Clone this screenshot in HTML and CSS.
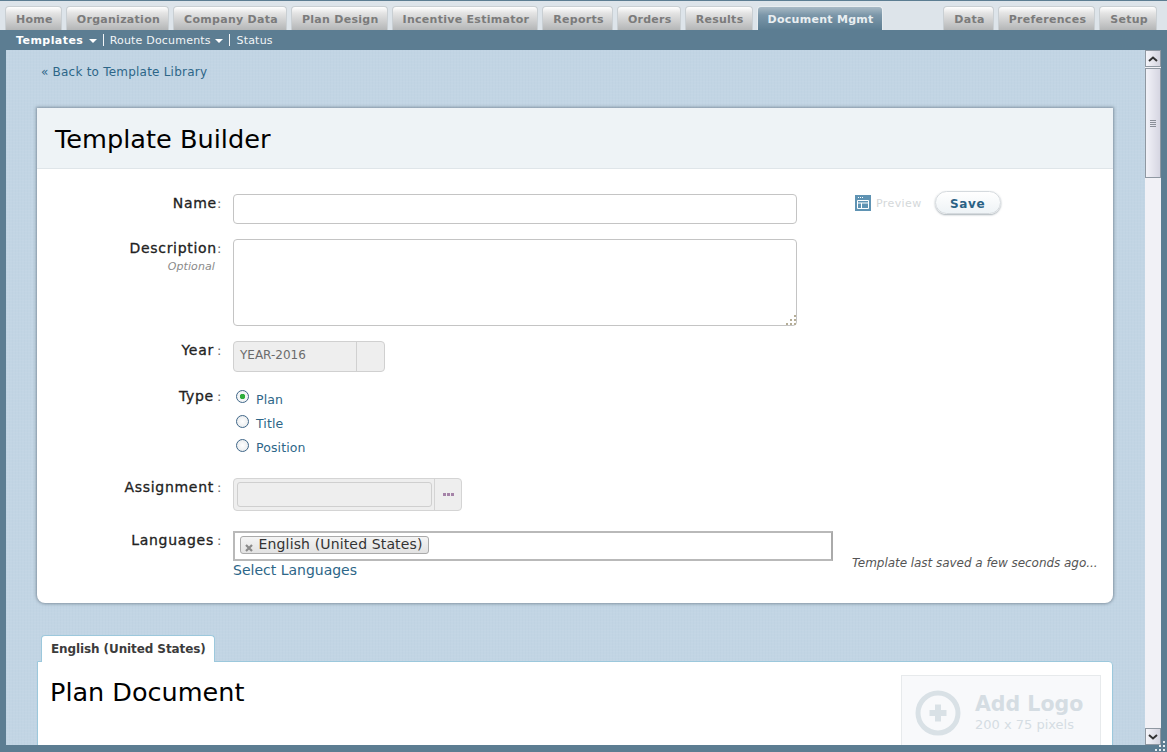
FILE: index.html
```html
<!DOCTYPE html>
<html lang="en">
<head>
  <meta charset="UTF-8" />
  <title>Template Builder</title>
  <link rel="stylesheet" href="styles.css">
</head>
<body>
  <header class="tabbar">
    <nav class="tabs">
      <a class="tab">Home</a>
      <a class="tab">Organization</a>
      <a class="tab">Company Data</a>
      <a class="tab">Plan Design</a>
      <a class="tab">Incentive Estimator</a>
      <a class="tab">Reports</a>
      <a class="tab">Orders</a>
      <a class="tab">Results</a>
      <a class="tab active">Document Mgmt</a>
    </nav>
    <nav class="tabs">
      <a class="tab">Data</a>
      <a class="tab">Preferences</a>
      <a class="tab">Setup</a>
    </nav>
  </header>

  <nav class="subnav">
    <a class="current">Templates <span class="caret"></span></a>
    <span class="sep"></span>
    <a>Route Documents <span class="caret"></span></a>
    <span class="sep"></span>
    <a>Status</a>
  </nav>

  <div class="frame">
    <main class="content">
      <a class="back">« Back to Template Library</a>

      <section class="card">
        <h1 class="card-title">Template Builder</h1>
        <div class="card-body">
          <form class="form">
            <div class="row row-name">
              <label class="label">Name<i>:</i></label>
              <input class="text-input" type="text">
            </div>
            <div class="row row-desc">
              <label class="label">Description<i>:</i><small>Optional</small></label>
              <div class="area-wrap">
                <textarea class="text-area"></textarea>
                <svg class="grip" width="11" height="11" viewBox="0 0 11 11" fill="#b5ad96">
                  <rect x="9" y="1" width="2" height="2"/>
                  <rect x="5" y="5" width="2" height="2"/>
                  <rect x="9" y="5" width="2" height="2"/>
                  <rect x="1" y="9" width="2" height="2"/>
                  <rect x="5" y="9" width="2" height="2"/>
                  <rect x="9" y="9" width="2" height="2"/>
                </svg>
              </div>
            </div>
            <div class="row row-year">
              <label class="label spaced">Year<i>:</i></label>
              <div class="select-box">
                <span class="select-value">YEAR-2016</span>
                <span class="select-arrow"></span>
              </div>
            </div>
            <div class="row row-type">
              <label class="label spaced">Type<i>:</i></label>
              <ul class="radios">
                <li><span class="radio checked"></span>Plan</li>
                <li><span class="radio"></span>Title</li>
                <li><span class="radio"></span>Position</li>
              </ul>
            </div>
            <div class="row row-assign">
              <label class="label spaced">Assignment<i>:</i></label>
              <div class="picker">
                <span class="picker-value"></span>
                <span class="picker-btn"><b></b><b></b><b></b></span>
              </div>
            </div>
            <div class="row row-lang">
              <label class="label spaced">Languages<i>:</i></label>
              <div>
                <div class="chips">
                  <span class="chip">
                    <svg width="8" height="8" viewBox="0 0 8 8"><path d="M1 1l6 6M7 1L1 7" stroke="#8a8a8a" stroke-width="2.2"/></svg>
                    English (United States)
                  </span>
                </div>
                <a class="select-link">Select Languages</a>
              </div>
            </div>
          </form>

          <aside class="side">
            <div class="actions">
              <a class="preview">
                <svg width="16" height="16" viewBox="0 0 16 16">
                  <rect width="16" height="16" fill="#5f93b3"/>
                  <path d="M2.5 5.5h11v8h-11zM6.5 8v5.5M3 8h10" fill="none" stroke="#fff"/>
                  <path d="M3 2h1v1H3zM5 2h1v1H5zM7 2h1v1H7z" fill="#fff"/>
                </svg>
                Preview
              </a>
              <button class="save" type="button">Save</button>
            </div>
            <p class="saved-note">Template last saved a few seconds ago...</p>
          </aside>
        </div>
      </section>

      <section class="doc">
        <div class="doc-tab">English (United States)</div>
        <div class="doc-page">
          <h2 class="doc-title">Plan Document</h2>
          <div class="logo-box">
            <svg width="46" height="46" viewBox="0 0 46 46">
              <circle cx="23" cy="23" r="20" fill="none" stroke="#d9e1e6" stroke-width="5"/>
              <path d="M23 14.5v17M14.5 23h17" stroke="#d9e1e6" stroke-width="6"/>
            </svg>
            <div class="logo-text">
              <strong>Add Logo</strong>
              <span>200 x 75 pixels</span>
            </div>
          </div>
        </div>
      </section>
    </main>

    <div class="scrollbar">
      <span class="sb-btn">
        <svg width="10" height="6" viewBox="0 0 10 6"><path d="M1 5l4-3.5L9 5" fill="none" stroke="#333" stroke-width="2"/></svg>
      </span>
      <span class="sb-thumb"><i></i><i></i><i></i><i></i></span>
      <span class="sb-track"></span>
      <span class="sb-btn">
        <svg width="10" height="6" viewBox="0 0 10 6"><path d="M1 1l4 3.5L9 1" fill="none" stroke="#333" stroke-width="2"/></svg>
      </span>
    </div>
  </div>

  <svg class="window-grip" width="12" height="12" viewBox="0 0 12 12" fill="#e6ecf0">
    <rect x="9" y="1" width="2" height="2"/>
    <rect x="5" y="5" width="2" height="2"/>
    <rect x="9" y="5" width="2" height="2"/>
    <rect x="1" y="9" width="2" height="2"/>
    <rect x="5" y="9" width="2" height="2"/>
    <rect x="9" y="9" width="2" height="2"/>
  </svg>
</body>
</html>
```

FILE: styles.css
```css
html, body {
  margin: 0;
  height: 100%;
  overflow: hidden;
}

body {
  display: flex;
  flex-direction: column;
  position: relative;
  height: 752px;
  background-color: #5c7d92;
  font-family: "DejaVu Sans", Verdana, sans-serif;
  font-size: 13px;
  color: #333;
}

a { color: #2d6688; text-decoration: none; }

/* top tabs */
.tabbar {
  display: flex;
  justify-content: space-between;
  align-items: flex-end;
  box-sizing: border-box;
  height: 30px;
  padding: 0 10px 0 5px;
  background-color: #dde4ea;
  border-top: 1px solid #5c7d92;
}

.tabs {
  display: flex;
  gap: 4px;
}

.tab {
  box-sizing: border-box;
  height: 24px;
  padding: 6px 8px 0 10px;
  border: 1px solid #c9cfd3;
  border-bottom: 0;
  border-radius: 4px 4px 0 0;
  background: linear-gradient(#fff 0, #e4e4e4 6px, #b4b6b7 100%);
  font-size: 11px;
  font-weight: bold;
  letter-spacing: 0.28px;
  line-height: 13px;
  white-space: nowrap;
  color: #7b7b7b;
}

.tab.active {
  background: linear-gradient(#a9bac6 0, #7c97a9 8px, #5c7d92 100%);
  border-color: #e8edf0;
  color: #e9eef1;
}

.subnav {
  display: flex;
  align-items: center;
  box-sizing: border-box;
  height: 20px;
  padding: 0 0 0 16px;
  background-color: #5c7d92;
  font-size: 11px;
  letter-spacing: 0.2px;
}

.subnav a { color: #f2f5f7; }
.subnav a.current { font-weight: bold; color: #fff; letter-spacing: 0.45px; }

.caret {
  display: inline-block;
  margin-left: 1px;
  vertical-align: 1px;
  border: 4px solid transparent;
  border-top-color: #fff;
  border-bottom: 0;
}

.sep {
  width: 1px;
  height: 12px;
  margin: 0 6px;
  background-color: #f2f5f7;
}

/* page frame */
.frame {
  display: flex;
  flex: none;
  height: 695px;
  margin: 0 6px;
  overflow: hidden;
  background-color: #c2d5e4;
  background-image:
    repeating-linear-gradient(0deg, rgba(255,255,255,0.03) 0 1px, transparent 1px 3px),
    repeating-linear-gradient(90deg, rgba(90,120,150,0.025) 0 1px, transparent 1px 3px);
}

.content {
  flex: 1;
  min-width: 0;
  padding: 15px 32px 0 31px;
}

.back {
  display: block;
  height: 43px;
  padding-left: 4px;
  font-size: 12px;
  letter-spacing: 0.22px;
  line-height: 14px;
}

/* builder card */
.card {
  box-sizing: border-box;
  height: 495px;
  background-color: #fff;
  border-radius: 0 0 8px 8px;
  box-shadow: 0 0 3px 1px rgba(70, 85, 100, 0.5);
}

.card-title {
  box-sizing: border-box;
  height: 61px;
  margin: 0;
  padding: 15px 18px 0;
  background-color: #eef3f6;
  border-bottom: 1px solid #dfe5e9;
  font-size: 25.6px;
  font-weight: normal;
  line-height: 32px;
  color: #000;
}

.card-body {
  display: flex;
  height: 434px;
}

.form {
  flex: none;
  width: 815px;
  box-sizing: border-box;
  padding-top: 25px;
}

.row {
  display: grid;
  grid-template-columns: 185px 1fr;
  column-gap: 11px;
}

.row-desc { margin-top: 15px; }
.row-year { margin-top: 15px; }
.row-type { margin-top: 16px; }
.row-assign { margin-top: 15px; }
.row-lang { margin-top: 20px; }

.label {
  padding-top: 1px;
  text-align: right;
  font-size: 14px;
  letter-spacing: 0.7px;
  line-height: 16px;
  color: #222;
  -webkit-text-stroke: 0.3px #222;
}

.row-type .label { padding-top: 0; }

.label i {
  font-style: normal;
  font-size: 13px;
  -webkit-text-stroke: 0;
  color: #666;
}

.label.spaced i { margin-left: 3px; }

.label small {
  display: block;
  margin: 3px 7px 0 0;
  font-size: 11px;
  font-style: italic;
  line-height: 13px;
  letter-spacing: 0.1px;
  color: #8a8a8a;
  -webkit-text-stroke: 0;
}

.text-input, .text-area {
  display: block;
  box-sizing: border-box;
  width: 564px;
  margin: 0;
  background-color: #fff;
  border: 1px solid #c4c4c4;
  border-radius: 4px;
  outline: none;
}

.text-input { height: 30px; }
.text-area { height: 87px; resize: none; }

.area-wrap {
  position: relative;
  width: 564px;
}

.grip {
  position: absolute;
  right: 1px;
  bottom: 1px;
}

.select-box {
  display: flex;
  box-sizing: border-box;
  width: 152px;
  height: 31px;
  background-color: #eee;
  border: 1px solid #d0d0d0;
  border-radius: 4px;
}

.select-value {
  flex: 1;
  padding: 5px 0 0 6px;
  font-size: 12px;
  line-height: 16px;
  color: #6b6b6b;
}

.select-arrow {
  width: 27px;
  border-left: 1px solid #d0d0d0;
}

.radios {
  margin: 0;
  padding: 0;
  list-style: none;
}

.radios li {
  display: flex;
  height: 24px;
  padding-left: 3px;
  font-size: 12.5px;
  letter-spacing: 0.1px;
  line-height: 18px;
  color: #2d6688;
}

.radios li:first-child { margin-top: 3px; }

.radio {
  box-sizing: border-box;
  width: 13px;
  height: 13px;
  margin: 0 7px 0 0;
  background: radial-gradient(circle at 50% 50%, #fff 0, #e3e6e8 100%);
  border: 1px solid #3f6688;
  border-radius: 50%;
}

.radio.checked {
  margin-top: -1px;
  background: radial-gradient(circle at 50% 50%, #2fae3c 0 2.5px, #f3f5f6 3px);
}

.picker {
  display: flex;
  box-sizing: border-box;
  width: 229px;
  height: 33px;
  background-color: #eee;
  border: 1px solid #d4d4d4;
  border-radius: 4px;
}

.picker-value {
  width: 193px;
  height: 23px;
  margin: 3px 0 0 3px;
  background-color: #eee;
  border: 1px solid #cfcfcf;
  border-radius: 3px;
}

.picker-btn {
  display: flex;
  flex: 1;
  align-items: center;
  justify-content: center;
  gap: 1px;
  margin-left: 2px;
  border-left: 1px solid #d4d4d4;
}

.picker-btn b {
  width: 3px;
  height: 3px;
  background-color: #a583a8;
}

.chips {
  box-sizing: border-box;
  width: 600px;
  height: 30px;
  padding: 3px 5px;
  background-color: #fff;
  border: 2px solid #b9b9b9;
  border-right-color: #aaa;
}

.chip {
  display: inline-block;
  box-sizing: border-box;
  height: 18px;
  padding: 0 5px 0 4px;
  background: linear-gradient(#f4f4f4, #e2e2e2);
  border: 1px solid #aaa;
  border-radius: 3px;
  font-size: 14px;
  letter-spacing: 0.14px;
  line-height: 15px;
  color: #333;
  white-space: nowrap;
}

.chip svg {
  margin-right: 1px;
  vertical-align: -3px;
}

.select-link {
  display: block;
  margin-top: 1px;
  font-size: 14px;
  line-height: 17px;
}

/* save + preview */
.side {
  display: flex;
  flex: 1;
  flex-direction: column;
  justify-content: space-between;
  min-width: 0;
}

.actions {
  display: flex;
  align-items: flex-start;
  padding: 22px 0 0 3px;
}

.preview {
  display: flex;
  align-items: center;
  gap: 5px;
  height: 24px;
  margin-right: 13px;
  font-size: 11px;
  letter-spacing: 0.4px;
  color: #d4d8da;
}

.save {
  box-sizing: border-box;
  width: 66px;
  height: 23px;
  padding: 2px 0 0;
  background: linear-gradient(#fff, #eef3f6);
  border: 1px solid #d5dade;
  border-radius: 12px;
  box-shadow: 0 1px 2px 0 rgba(110, 125, 135, 0.6);
  font-family: inherit;
  font-size: 12px;
  font-weight: bold;
  letter-spacing: 0.6px;
  color: #2b6285;
}

.saved-note {
  margin: 0 0 33px 0;
  font-size: 12px;
  font-style: italic;
  letter-spacing: -0.04px;
  line-height: 14px;
  color: #555;
  white-space: nowrap;
}

/* document preview */
.doc {
  margin-top: 32px;
}

.doc-tab {
  box-sizing: border-box;
  width: 174px;
  height: 27px;
  margin-left: 4px;
  padding: 6px 0 0 9px;
  background-color: #fff;
  border: 1px solid #9cc8dc;
  border-bottom: 0;
  border-radius: 4px 4px 0 0;
  font-size: 12px;
  font-weight: bold;
  letter-spacing: -0.1px;
  line-height: 14px;
  white-space: nowrap;
  color: #3c3c3c;
  position: relative;
  z-index: 1;
  margin-bottom: -1px;
}

.doc-page {
  display: flex;
  justify-content: space-between;
  box-sizing: border-box;
  height: 200px;
  padding: 14px 11px 0 12px;
  background-color: #fff;
  border: 1px solid #9cc8dc;
  border-radius: 0 4px 0 0;
}

.doc-title {
  margin: 0;
  font-size: 25.5px;
  font-weight: normal;
  line-height: 32px;
  color: #000;
}

.logo-box {
  display: flex;
  align-items: center;
  gap: 14px;
  box-sizing: border-box;
  width: 200px;
  height: 75px;
  margin-top: -1px;
  padding: 0 0 0 13px;
  background-color: #f8f9fb;
  border: 1px solid #e7eaec;
}

.logo-text {
  display: flex;
  flex-direction: column;
}

.logo-text strong {
  font-size: 20.5px;
  line-height: 24px;
  color: #d5dde3;
}

.logo-text span {
  font-size: 13px;
  line-height: 17px;
  color: #d5dde3;
}

/* fake window scrollbar */
.scrollbar {
  display: flex;
  flex: none;
  flex-direction: column;
  width: 16px;
  background-color: #f1f1f6;
}

.sb-btn {
  display: flex;
  flex: none;
  align-items: center;
  justify-content: center;
  box-sizing: border-box;
  height: 17px;
  background: linear-gradient(90deg, #f5f5fa, #d4d4df);
  border: 1px solid #8f98a2;
}

.sb-thumb {
  display: flex;
  flex: none;
  flex-direction: column;
  align-items: center;
  justify-content: center;
  gap: 1px;
  box-sizing: border-box;
  height: 110px;
  margin-top: 1px;
  background: linear-gradient(90deg, #f2f2f8, #d6d6e2);
  border: 1px solid #8f98a2;
}

.sb-thumb i {
  width: 6px;
  height: 1px;
  background-color: #8a8f98;
}

.sb-track {
  flex: 1;
}

.window-grip {
  position: absolute;
  right: 1px;
  bottom: 0;
}
```
